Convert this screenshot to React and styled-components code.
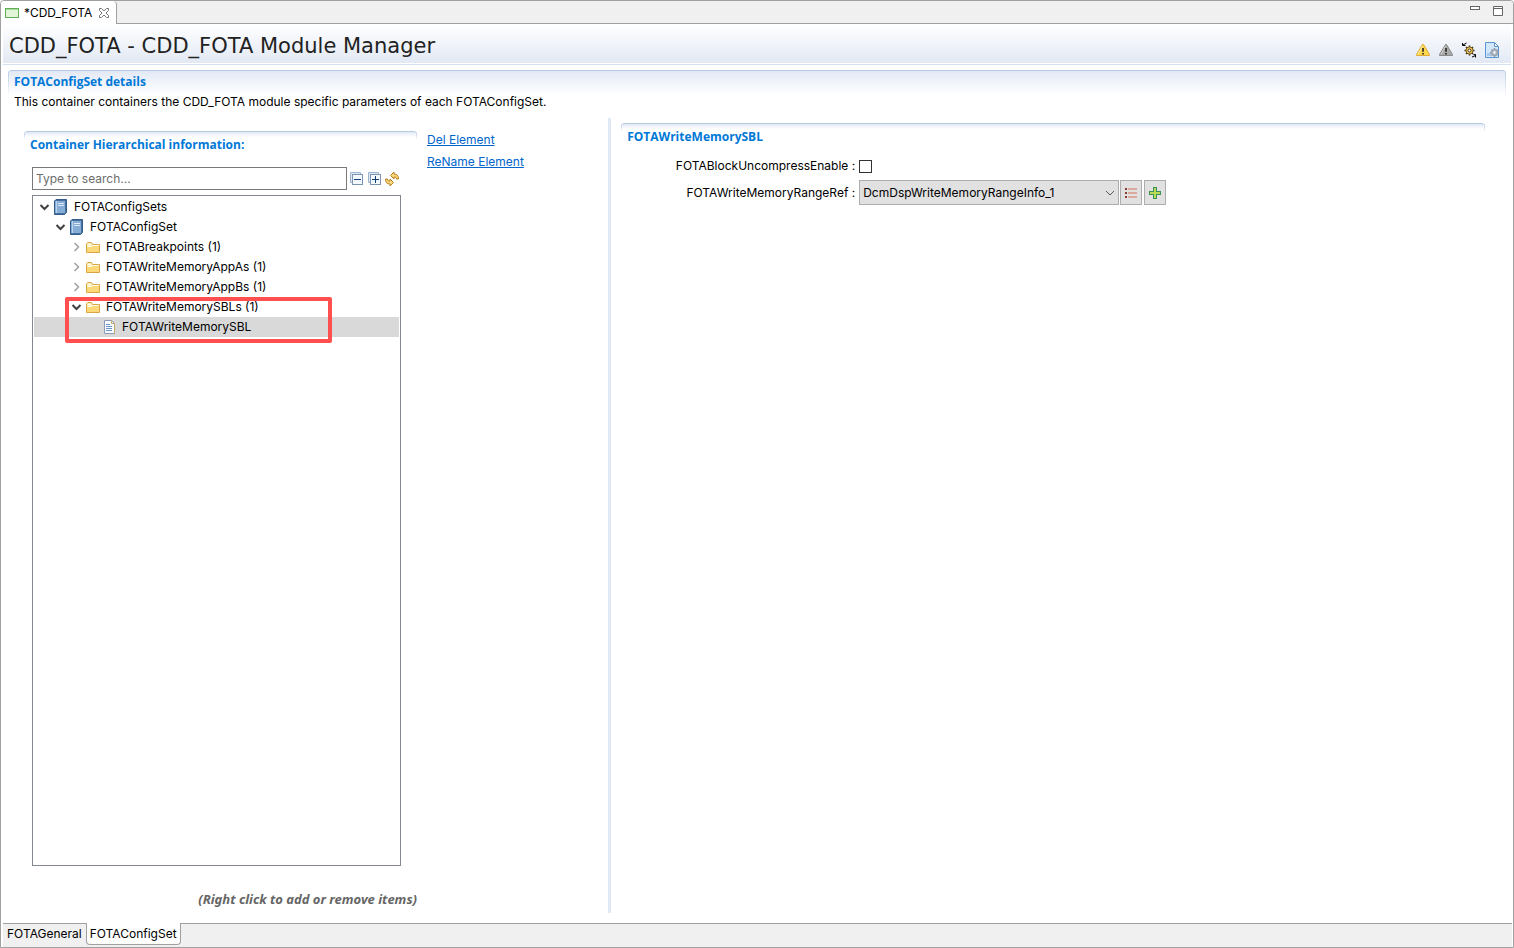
import React, { useState } from 'react'
import styled, { createGlobalStyle } from 'styled-components'

const tree = [
  { label: 'FOTAConfigSets', depth: 0, icon: 'book', open: true },
  { label: 'FOTAConfigSet', depth: 1, icon: 'book', open: true },
  { label: 'FOTABreakpoints (1)', depth: 2, icon: 'folder', open: false },
  { label: 'FOTAWriteMemoryAppAs (1)', depth: 2, icon: 'folder', open: false },
  { label: 'FOTAWriteMemoryAppBs (1)', depth: 2, icon: 'folder', open: false },
  { label: 'FOTAWriteMemorySBLs (1)', depth: 2, icon: 'folder', open: true },
  { label: 'FOTAWriteMemorySBL', depth: 3, icon: 'page', leaf: true }
]

function Icon({ children, size = 16 }) {
  return (
    <Svg width={size} height={size} viewBox={`0 0 ${size} ${size}`} aria-hidden="true">
      {children}
    </Svg>
  )
}

const EditorIcon = () => (
  <Icon>
    <rect x="1.5" y="3.5" width="13" height="9" fill="#e3f5d9" stroke="#62ad56" />
    <path d="M2 4.5h12" stroke="#a8dba0" />
  </Icon>
)

const CloseIcon = () => (
  <Icon size={12}>
    <path
      d="M1.5 1.5h2L6 4l2.5-2.5h2v2L8 6l2.5 2.5v2h-2L6 8l-2.5 2.5h-2v-2L4 6 1.5 3.5z"
      fill="#fff"
      stroke="#777"
    />
  </Icon>
)

const MinimizeIcon = () => (
  <Icon>
    <rect x="3.5" y="2.5" width="9" height="3" fill="#fff" stroke="#666" />
  </Icon>
)

const MaximizeIcon = () => (
  <Icon>
    <path d="M3.5 2.5h9v9h-9zM3 4.5h10" fill="#fff" stroke="#666" />
  </Icon>
)

const WarningIcon = ({ muted }) => (
  <Icon>
    <path
      d="M7.5 2.5h1l6 10v1h-13v-1z"
      fill={muted ? '#a9a9a9' : '#ffd84f'}
      stroke={muted ? '#8a8a8a' : '#dfaa35'}
    />
    <path d="M7.5 4L3 12.5" stroke={muted ? '#d0d0d0' : '#fff0a8'} />
    <path d="M7.2 6h1.6v2.500l-.3 1.500h-1l-.3-1.500zM7.2 11h1.600v1.500H7.200z" fill="#222" />
  </Icon>
)

const GearSyncIcon = () => (
  <Icon>
    <path
      d="M8.5 3.500v10M3.500 8.500h10M5 5l7 7M12 5l-7 7"
      stroke="#3c2f16"
      strokeWidth="1.5"
    />
    <circle cx="8.5" cy="8.5" r="3.6" fill="#f8cd5c" stroke="#6b501a" />
    <circle cx="8.5" cy="8.5" r="1.5" fill="#fff" stroke="#3c2f16" />
    <path d="M5.5 1L2 3M1.500 1v2.500H4.500M11 15l3.500-1.500M12.500 12.500H14.500V15.500" fill="none" stroke="#000" />
  </Icon>
)

const PageGearIcon = () => (
  <Icon>
    <path d="M1.5 .5h9l4 4v11h-13z" fill="#d3e7fa" stroke="#5c96d2" />
    <path d="M10.5 .5v4h4z" fill="#fff" stroke="#5c96d2" />
    <path d="M3 12.5h4" stroke="#a4c8ec" strokeWidth="3" />
    <path
      d="M10.5 6v9M6 10.5h9M7.5 7.5l6 6M13.5 7.5l-6 6"
      stroke="#8f98a3"
      strokeWidth="1.5"
    />
    <circle cx="10.5" cy="10.5" r="3" fill="#b4bcc5" stroke="#8f98a3" />
    <circle cx="10.5" cy="10.5" r="1.2" fill="#eef5fc" />
  </Icon>
)

const ExpandIcon = ({ plus }) => (
  <Icon>
    <path d="M1.5 11.5v-10h10v2h-8v8z" fill="#dce8f4" stroke="#9db4cf" />
    <rect x="3.5" y="3.5" width="10" height="10" fill="#f4f9fd" stroke="#7c93b2" />
    <path d={plus ? 'M5 8.5h7M8.5 5v7' : 'M5 8.5h7'} stroke="#0f3f78" />
  </Icon>
)

const RefreshIcon = () => (
  <Icon>
    <path
      d="M5.5 4.500L9 1v2c3 0 4.500 1.500 4.500 5h-2c0-1.500-.5-2-2.500-2v2z"
      fill="#fbd77c"
      stroke="#b9811e"
    />
    <path
      d="M8.5 11.500L5 15v-2c-3 0-4.500-1.500-4.500-5h2c0 1.500.5 2 2.500 2V8z"
      fill="#fbd77c"
      stroke="#b9811e"
    />
  </Icon>
)

const BookIcon = () => (
  <Icon>
    <path d="M3 .5h10.5v13l-2 2h-10V2z" fill="#47729f" stroke="#345c8a" />
    <path d="M2 2h10v12H2z" fill="#86add5" />
    <path d="M3.5 2v12" stroke="#bdd5ec" />
    <path d="M5 4.5h6M5 6.5h6" stroke="#dce9f6" />
  </Icon>
)

const FolderIcon = () => (
  <Icon>
    <path d="M1.5 13.5v-9l1-1h4l1 2h7v8z" fill="#fdf0bd" stroke="#dba544" />
    <path d="M2 13V8h4l1-1h7v6z" fill="#fbd978" />
    <path d="M3 5.5h3M3 7.500h4l1-1h6" fill="none" stroke="#fffbe9" />
  </Icon>
)

const PageIcon = () => (
  <Icon>
    <path d="M3.5 1.5h7l3 3v10h-10z" fill="#f7fbff" stroke="#8c9ab5" />
    <path d="M10.5 1.5v3h3v10" fill="none" stroke="#c0ab6b" />
    <path d="M5 5.5h4M5 7.5h6M5 9.5h6M5 11.5h6" stroke="#6c95ce" />
  </Icon>
)

const ListIcon = () => (
  <Icon>
    <path d="M2 4h2M2 8h2M2 12h2" stroke="#8a3c30" strokeWidth="2" />
    <path d="M5 4h9M5 8h9M5 12h9" stroke="#d4705a" />
  </Icon>
)

const PlusIcon = () => (
  <Icon>
    <path d="M6 2h4v4h4v4h-4v4H6v-4H2V6h4z" fill="#3c9158" />
    <path d="M7 3h2v4h4v2H9v4H7V9H3V7h4z" fill="#b9db56" />
  </Icon>
)

const Chevron = ({ open }) => (
  <Icon>
    <path
      d={open ? 'M4.5 6l4 4 4-4' : 'M6.5 4l4 4-4 4'}
      fill="none"
      stroke={open ? '#404040' : '#a0a0a0'}
      strokeWidth={open ? 2 : 1.5}
    />
  </Icon>
)

const nodeIcons = { book: BookIcon, folder: FolderIcon, page: PageIcon }

function TreeNode({ node, selected, onSelect }) {
  const NodeIcon = nodeIcons[node.icon]
  return (
    <Node
      role="treeitem"
      aria-level={node.depth + 1}
      aria-selected={selected}
      $depth={node.depth}
      $selected={selected}
      onClick={onSelect}
    >
      {node.leaf ? <Blank /> : <Chevron open={node.open} />}
      <NodeIcon />
      <span>{node.label}</span>
    </Node>
  )
}

export default function App() {
  const [selected, setSelected] = useState('FOTAWriteMemorySBL')
  const [search, setSearch] = useState('')
  const [enabled, setEnabled] = useState(false)
  return (
    <>
      <GlobalStyle />
      <Window>
        <TabBar>
          <EditorTab>
            <EditorIcon />
            <span>*CDD_FOTA</span>
            <IconButton aria-label="Close">
              <CloseIcon />
            </IconButton>
          </EditorTab>
          <WindowButtons>
            <IconButton aria-label="Minimize">
              <MinimizeIcon />
            </IconButton>
            <IconButton aria-label="Maximize">
              <MaximizeIcon />
            </IconButton>
          </WindowButtons>
        </TabBar>
        <Header>
          <Title>CDD_FOTA - CDD_FOTA Module Manager</Title>
          <HeaderTools>
            <IconButton aria-label="Warnings">
              <WarningIcon />
            </IconButton>
            <IconButton aria-label="Ignored warnings">
              <WarningIcon muted />
            </IconButton>
            <IconButton aria-label="Validate">
              <GearSyncIcon />
            </IconButton>
            <IconButton aria-label="Generate">
              <PageGearIcon />
            </IconButton>
          </HeaderTools>
        </Header>
        <Details>
          <SectionTitle>FOTAConfigSet details</SectionTitle>
          <Description>
            This container containers the CDD_FOTA module specific parameters of each FOTAConfigSet.
          </Description>
        </Details>
        <Columns>
          <Master>
            <TreeSection>
              <SectionHead>
                <SectionTitle>Container Hierarchical information:</SectionTitle>
              </SectionHead>
              <SearchRow>
                <Search
                  aria-label="Search"
                  placeholder="Type to search..."
                  value={search}
                  onChange={e => setSearch(e.target.value)}
                />
                <IconButton aria-label="Collapse all">
                  <ExpandIcon />
                </IconButton>
                <IconButton aria-label="Expand all">
                  <ExpandIcon plus />
                </IconButton>
                <IconButton aria-label="Refresh">
                  <RefreshIcon />
                </IconButton>
              </SearchRow>
              <Tree role="tree">
                {tree.map(node => (
                  <TreeNode
                    key={node.label}
                    node={node}
                    selected={selected === node.label}
                    onSelect={() => setSelected(node.label)}
                  />
                ))}
                <Highlight />
              </Tree>
              <Hint>(Right click to add or remove items)</Hint>
            </TreeSection>
            <Actions>
              <a href="#delete">Del Element</a>
              <a href="#rename">ReName Element</a>
            </Actions>
          </Master>
          <Properties>
            <SectionHead>
              <SectionTitle>FOTAWriteMemorySBL</SectionTitle>
            </SectionHead>
            <Form>
              <label htmlFor="uncompress">FOTABlockUncompressEnable :</label>
              <Checkbox
                id="uncompress"
                type="checkbox"
                checked={enabled}
                onChange={e => setEnabled(e.target.checked)}
              />
              <label htmlFor="range">FOTAWriteMemoryRangeRef :</label>
              <Field>
                <SelectBox>
                  <Select id="range">
                    <option>DcmDspWriteMemoryRangeInfo_1</option>
                  </Select>
                  <Arrow width="10" height="6" viewBox="0 0 10 6" aria-hidden="true">
                    <path d="M1 1l4 4 4-4" fill="none" stroke="#555" />
                  </Arrow>
                </SelectBox>
                <ToolButton aria-label="Choose from list">
                  <ListIcon />
                </ToolButton>
                <ToolButton aria-label="Add reference">
                  <PlusIcon />
                </ToolButton>
              </Field>
            </Form>
          </Properties>
        </Columns>
        <PageTabs>
          <PageTab>FOTAGeneral</PageTab>
          <PageTab $active>FOTAConfigSet</PageTab>
        </PageTabs>
      </Window>
    </>
  )
}

const GlobalStyle = createGlobalStyle`
  * {
    box-sizing: border-box;
  }
  body {
    margin: 0;
    background: #fff;
    color: #000;
    font: 12px/20px Inter, sans-serif;
  }
  button,
  input,
  select {
    font: inherit;
    color: inherit;
  }
  a {
    color: #0066cc;
  }
`

const Svg = styled.svg`
  display: block;
  flex: none;
`

const Window = styled.div`
  display: flex;
  flex-direction: column;
  min-height: 100vh;
  border: 1px solid #a0a0a0;
  border-radius: 4px 4px 0 0;
`

const IconButton = styled.button`
  display: flex;
  padding: 0;
  border: 0;
  background: none;
`

const TabBar = styled.div`
  display: flex;
  justify-content: space-between;
  height: 23px;
  background: #f0f0f0;
  border-bottom: 1px solid #a0a0a0;
  border-radius: 4px 4px 0 0;
`

const EditorTab = styled.div`
  display: flex;
  align-items: center;
  gap: 4px;
  height: 23px;
  padding: 0 6px 0 3px;
  background: #fff;
  border-right: 1px solid #a0a0a0;
  border-radius: 4px 4px 0 0;

  button {
    margin-left: 2px;
  }
`

const WindowButtons = styled.div`
  display: flex;
  align-items: center;
  gap: 7px;
  padding-right: 7px;
`

const Header = styled.header`
  display: flex;
  align-items: center;
  justify-content: space-between;
  height: 41px;
  margin: 0 2px;
  padding: 0 11px 0 6px;
  background: linear-gradient(#fff, #e2e9f4 39px, #fff 39px);
  border-bottom: 1px solid #d5e0ee;
`

const Title = styled.h1`
  margin: 0;
  padding-top: 4px;
  font: 21px/36px 'DejaVu Sans', sans-serif;
  color: #222;
`

const HeaderTools = styled.div`
  display: flex;
  gap: 7px;
  padding-top: 12px;
`

const Details = styled.section`
  margin: 5px 7px 0;
  padding: 1px 6px 0;
  border-top: 1px solid #b5c9e2;
  border-radius: 4px 4px 0 0;
  background:
    linear-gradient(#b5c9e2, #fff) 0 0 / 1px 26px no-repeat,
    linear-gradient(#b5c9e2, #fff) 100% 0 / 1px 26px no-repeat,
    linear-gradient(#e3e9f5, #fff 24px);
`

const SectionTitle = styled.h2`
  margin: 0;
  font: 700 12px/20px 'Open Sans', sans-serif;
  color: #0078d7;
`

const Description = styled.p`
  margin: 0;
`

const Columns = styled.div`
  display: flex;
  flex: 1;
  margin: 6px 7px 10px;
`

const Master = styled.div`
  display: flex;
  flex: 0 0 40%;
  padding: 13px 0 0 16px;
`

const TreeSection = styled.section`
  display: flex;
  flex-direction: column;
  width: 393px;
`

const SectionHead = styled.div`
  padding: 3px 6px 0;
  border-top: 1px solid #b5c9e2;
  border-radius: 4px 4px 0 0;
  background:
    linear-gradient(#b5c9e2, #fff) 0 0 / 1px 8px no-repeat,
    linear-gradient(#b5c9e2, #fff) 100% 0 / 1px 8px no-repeat,
    linear-gradient(#e3e9f5, #fff 5px);
`

const SearchRow = styled.div`
  display: flex;
  align-items: center;
  gap: 2px;
  margin: 12px 16px 5px 8px;
`

const Search = styled.input`
  flex: 1;
  min-width: 0;
  height: 23px;
  padding: 0 3px;
  border: 1px solid #7a7a7a;

  &::placeholder {
    color: #6d6d6d;
    opacity: 1;
  }
`

const Tree = styled.div`
  position: relative;
  flex: 1;
  margin: 0 16px 0 8px;
  padding: 1px;
  border: 1px solid #828790;
`

const Node = styled.div`
  display: flex;
  align-items: center;
  height: 20px;
  padding-left: ${({ $depth }) => 2 + $depth * 16}px;
  background: ${({ $selected }) => ($selected ? '#d9d9d9' : 'none')};

  span {
    padding-left: 5px;
  }

  svg:nth-child(2) {
    margin-left: 1px;
  }
`

const Blank = styled.i`
  width: 16px;
`

const Highlight = styled.div`
  position: absolute;
  top: 101px;
  left: 32px;
  width: 267px;
  height: 46px;
  border: 4px solid #ff4f4f;
  border-radius: 2px;
  pointer-events: none;
`

const Hint = styled.p`
  margin: 23px 0 4px;
  text-align: right;
  font: italic 700 13px/20px 'Noto Sans', sans-serif;
  color: #666;
`

const Actions = styled.nav`
  display: flex;
  flex-direction: column;
  align-items: flex-start;
  gap: 2px;
  margin-top: -1px;
  padding-left: 10px;
`

const Properties = styled.section`
  flex: 1;
  margin-left: 1px;
  padding: 5px 21px 0 10px;
  border-left: 3px solid #dfe8f3;
`

const Form = styled.div`
  display: grid;
  grid-template-columns: 234px 1fr;
  align-items: center;
  gap: 4px;
  padding-top: 9px;

  label {
    text-align: right;
  }
`

const Checkbox = styled.input`
  appearance: none;
  width: 13px;
  height: 13px;
  margin: 0;
  border: 1px solid #333;
  background: #fff;

  &:checked {
    background: #0078d7;
  }
`

const Field = styled.div`
  display: flex;
  gap: 2px;
`

const SelectBox = styled.div`
  display: grid;
  align-items: center;
  width: 260px;
  margin-right: -1px;
`

const Select = styled.select`
  grid-area: 1 / 1;
  appearance: none;
  height: 25px;
  padding: 0 20px 0 3px;
  border: 1px solid #adadad;
  border-radius: 0;
  background: #e1e1e1;
`

const Arrow = styled.svg`
  grid-area: 1 / 1;
  justify-self: end;
  margin-right: 4px;
  pointer-events: none;
`

const ToolButton = styled.button`
  display: flex;
  align-items: center;
  justify-content: center;
  width: 22px;
  height: 25px;
  padding: 0;
  border: 1px solid #adadad;
  background: #e1e1e1;
`

const PageTabs = styled.div`
  display: flex;
  height: 24px;
  margin: 0 1px 0 2px;
  background: #f0f0f0;
  border-top: 1px solid #a0a0a0;
`

const PageTab = styled.button`
  height: ${({ $active }) => ($active ? '22px' : '20px')};
  margin-top: ${({ $active }) => ($active ? '-1px' : '0')};
  padding: 0 3px;
  border: 1px solid ${({ $active }) => ($active ? '#a0a0a0' : 'transparent')};
  border-top: 0;
  border-radius: 0 0 4px 4px;
  background: ${({ $active }) => ($active ? '#fff' : 'none')};
`
